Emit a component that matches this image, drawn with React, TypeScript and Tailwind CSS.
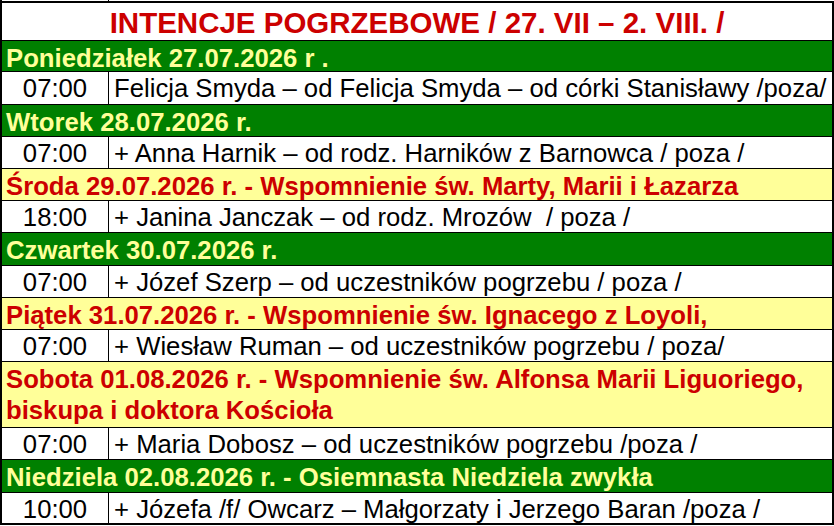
type DayRow = { kind: "day"; tone: "green" | "yellow"; lines: string[]; h: string };
type MassRow = { kind: "mass"; time: string; text: string; h: string };
type Row = DayRow | MassRow;

const rows: Row[] = [
  { kind: "day", tone: "green", lines: ["Poniedziałek 27.07.2026 r ."], h: "h-[31px]" },
  { kind: "mass", time: "07:00", text: "Felicja Smyda – od Felicja Smyda – od córki Stanisławy /poza/", h: "h-[33px]" },
  { kind: "day", tone: "green", lines: ["Wtorek 28.07.2026 r."], h: "h-[32px]" },
  { kind: "mass", time: "07:00", text: "+ Anna Harnik – od rodz. Harników z Barnowca / poza /", h: "h-[32px]" },
  { kind: "day", tone: "yellow", lines: ["Środa 29.07.2026 r. - Wspomnienie św. Marty, Marii i Łazarza"], h: "h-[32px]" },
  { kind: "mass", time: "18:00", text: "+ Janina Janczak – od rodz. Mrozów  / poza /", h: "h-[32px]" },
  { kind: "day", tone: "green", lines: ["Czwartek 30.07.2026 r."], h: "h-[33px]" },
  { kind: "mass", time: "07:00", text: "+ Józef Szerp – od uczestników pogrzebu / poza /", h: "h-[32px]" },
  { kind: "day", tone: "yellow", lines: ["Piątek 31.07.2026 r. - Wspomnienie św. Ignacego z Loyoli,"], h: "h-[32px]" },
  { kind: "mass", time: "07:00", text: "+ Wiesław Ruman – od uczestników pogrzebu / poza/", h: "h-[32px]" },
  {
    kind: "day",
    tone: "yellow",
    lines: ["Sobota 01.08.2026 r. - Wspomnienie św. Alfonsa Marii Liguoriego,", "biskupa i doktora Kościoła"],
    h: "h-[66px]",
  },
  { kind: "mass", time: "07:00", text: "+ Maria Dobosz – od uczestników pogrzebu /poza /", h: "h-[32px]" },
  { kind: "day", tone: "green", lines: ["Niedziela 02.08.2026 r. - Osiemnasta Niedziela zwykła"], h: "h-[33px]" },
  { kind: "mass", time: "10:00", text: "+ Józefa /f/ Owcarz – Małgorzaty i Jerzego Baran /poza /", h: "h-[30px]" },
];

function Day({ row, last }: { row: DayRow; last: boolean }) {
  const tone = row.tone === "green" ? "bg-[#008000] text-[#ffff99]" : "bg-[#ffff99] text-[#cc0000]";
  const multi = row.lines.length > 1;
  return (
    <div className={`${row.h} ${tone} ${last ? "" : "border-b border-black"} pl-[4px] font-bold whitespace-nowrap`}>
      {multi ? (
        <div className="pt-[2px] leading-[31px]">
          {row.lines.map((l) => (
            <div key={l}>{l}</div>
          ))}
        </div>
      ) : (
        <div className="leading-[34px]">{row.lines[0]}</div>
      )}
    </div>
  );
}

function Mass({ row, last }: { row: MassRow; last: boolean }) {
  return (
    <div className={`${row.h} flex bg-white text-black ${last ? "" : "border-b border-black"} leading-[33px]`}>
      <div className="w-[106px] shrink-0 text-center">{row.time}</div>
      <div className="flex-1 border-l border-black pl-[5px] whitespace-pre">{row.text}</div>
    </div>
  );
}

export default function App() {
  return (
    <div className="w-[834px] h-[526px] bg-white font-['Liberation_Sans',Arial,sans-serif] text-[25.7px] overflow-hidden">
      {/* tail of the previous row */}
      <div className="flex h-px">
        <div className="w-[2px] bg-black" />
        <div className="w-[106px]" />
        <div className="w-px bg-black" />
      </div>
      <div className="border-2 border-black">
        <div className="h-[38px] border-b border-black text-center text-[29.5px] font-bold leading-[39px] text-[#cc0000] whitespace-nowrap">
          INTENCJE POGRZEBOWE / 27. VII – 2. VIII. /
        </div>
        {rows.map((row, i) =>
          row.kind === "day" ? (
            <Day key={i} row={row} last={i === rows.length - 1} />
          ) : (
            <Mass key={i} row={row} last={i === rows.length - 1} />
          )
        )}
      </div>
    </div>
  );
}
